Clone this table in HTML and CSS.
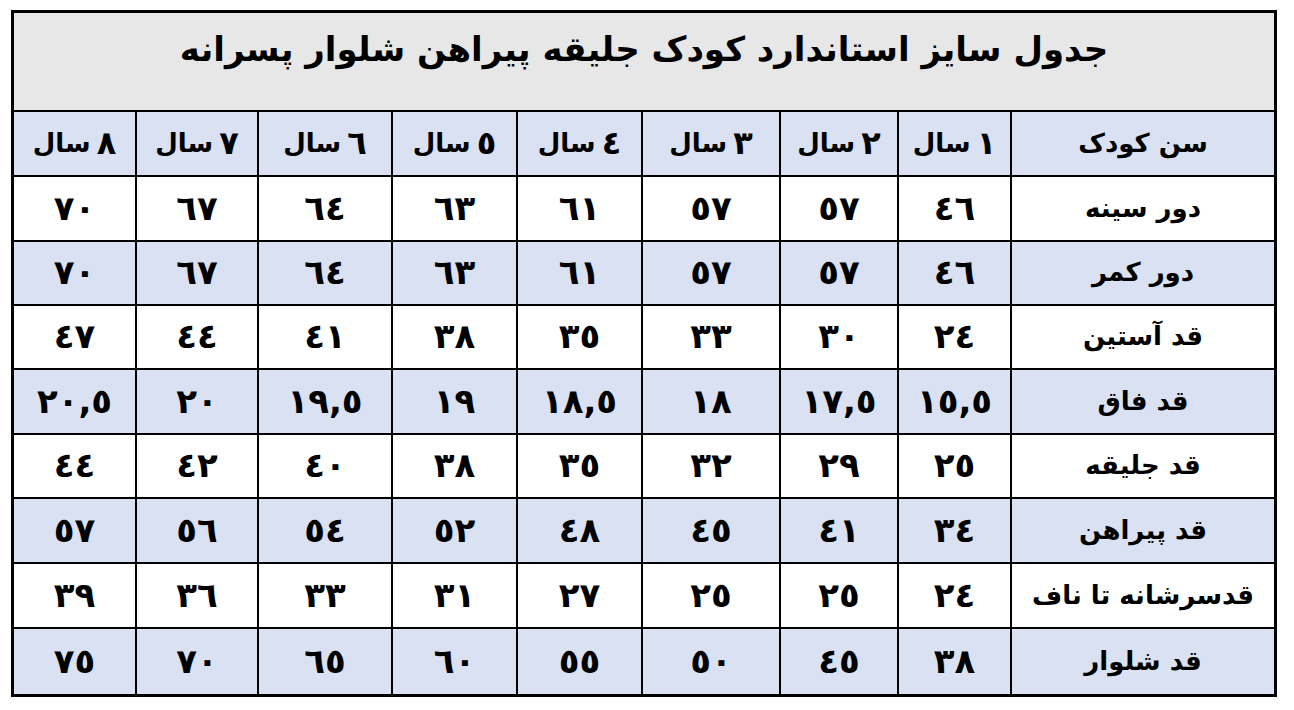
FILE: index.html
```html
<!DOCTYPE html>
<html lang="fa" dir="rtl">
<head>
<meta charset="utf-8">
<title>جدول سایز</title>
<link rel="stylesheet" href="styles.css">
</head>
<body>
<div class="sheet">
  <div class="title">جدول سایز استاندارد کودک جلیقه پیراهن شلوار پسرانه</div>

  <div class="cell head label">سن کودک</div>
  <div class="cell head label"><span class="n">١</span> سال</div>
  <div class="cell head label"><span class="n">٢</span> سال</div>
  <div class="cell head label"><span class="n">٣</span> سال</div>
  <div class="cell head label"><span class="n">٤</span> سال</div>
  <div class="cell head label"><span class="n">٥</span> سال</div>
  <div class="cell head label"><span class="n">٦</span> سال</div>
  <div class="cell head label"><span class="n">٧</span> سال</div>
  <div class="cell head label"><span class="n">٨</span> سال</div>

  <div class="cell label">دور سینه</div>
  <div class="cell">٤٦</div><div class="cell">٥٧</div><div class="cell">٥٧</div><div class="cell">٦١</div>
  <div class="cell">٦٣</div><div class="cell">٦٤</div><div class="cell">٦٧</div><div class="cell">٧٠</div>

  <div class="cell alt label">دور کمر</div>
  <div class="cell alt">٤٦</div><div class="cell alt">٥٧</div><div class="cell alt">٥٧</div><div class="cell alt">٦١</div>
  <div class="cell alt">٦٣</div><div class="cell alt">٦٤</div><div class="cell alt">٦٧</div><div class="cell alt">٧٠</div>

  <div class="cell label">قد آستین</div>
  <div class="cell">٢٤</div><div class="cell">٣٠</div><div class="cell">٣٣</div><div class="cell">٣٥</div>
  <div class="cell">٣٨</div><div class="cell">٤١</div><div class="cell">٤٤</div><div class="cell">٤٧</div>

  <div class="cell alt label">قد فاق</div>
  <div class="cell alt">١٥,٥</div><div class="cell alt">١٧,٥</div><div class="cell alt">١٨</div><div class="cell alt">١٨,٥</div>
  <div class="cell alt">١٩</div><div class="cell alt">١٩,٥</div><div class="cell alt">٢٠</div><div class="cell alt">٢٠,٥</div>

  <div class="cell label">قد جلیقه</div>
  <div class="cell">٢٥</div><div class="cell">٢٩</div><div class="cell">٣٢</div><div class="cell">٣٥</div>
  <div class="cell">٣٨</div><div class="cell">٤٠</div><div class="cell">٤٢</div><div class="cell">٤٤</div>

  <div class="cell alt label">قد پیراهن</div>
  <div class="cell alt">٣٤</div><div class="cell alt">٤١</div><div class="cell alt">٤٥</div><div class="cell alt">٤٨</div>
  <div class="cell alt">٥٢</div><div class="cell alt">٥٤</div><div class="cell alt">٥٦</div><div class="cell alt">٥٧</div>

  <div class="cell label">قدسرشانه تا ناف</div>
  <div class="cell">٢٤</div><div class="cell">٢٥</div><div class="cell">٢٥</div><div class="cell">٢٧</div>
  <div class="cell">٣١</div><div class="cell">٣٣</div><div class="cell">٣٦</div><div class="cell">٣٩</div>

  <div class="cell alt label">قد شلوار</div>
  <div class="cell alt">٣٨</div><div class="cell alt">٤٥</div><div class="cell alt">٥٠</div><div class="cell alt">٥٥</div>
  <div class="cell alt">٦٠</div><div class="cell alt">٦٥</div><div class="cell alt">٧٠</div><div class="cell alt">٧٥</div>
</div>
</body>
</html>
```

FILE: styles.css
```css
html, body {
  margin: 0;
  padding: 0;
  background: #ffffff;
}

body {
  padding: 10px 0 0 11px;
  direction: ltr;
}

.sheet {
  direction: rtl;
  width: 1266px;
  box-sizing: border-box;
  display: grid;
  grid-template-columns: 262px 111px 116px 136px 123px 123px 132px 120px 121px;
  grid-template-rows: 97px 63px 63px 62px 62px 63px 62px 63px 63px 65px;
  gap: 2px;
  padding: 3px;
  background: #000000;
  font-family: "DejaVu Sans", "Noto Sans", sans-serif;
  font-weight: bold;
  color: #000000;
}

.title {
  grid-column: 1 / -1;
  background: #e7e7e7;
  display: flex;
  justify-content: center;
  align-items: flex-start;
  padding-top: 15px;
  font-size: 34px;
  line-height: 42px;
}

.cell {
  background: #ffffff;
  display: flex;
  justify-content: center;
  align-items: center;
  font-size: 34px;
  line-height: 40px;
  padding-bottom: 2px;
  box-sizing: border-box;
}

.label {
  font-size: 26px;
  line-height: 32px;
}

.n {
  font-size: 32px;
  margin-left: 6px;
}

.head,
.alt {
  background: #d9e1f2;
}
```
